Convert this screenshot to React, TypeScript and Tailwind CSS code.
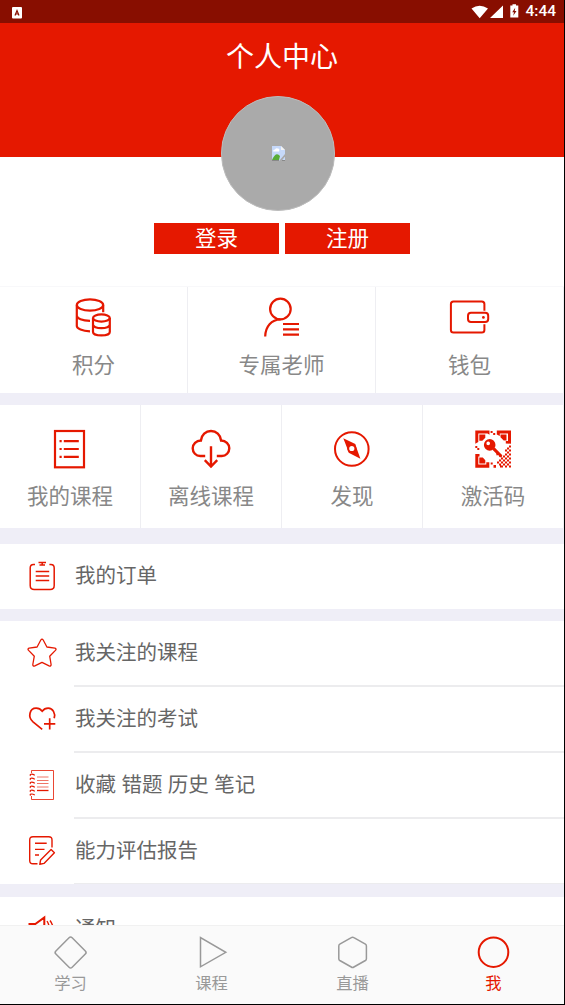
import type { ReactNode } from 'react';

type Item = { label: string; icon: ReactNode };

const line = { fill: 'none', stroke: 'currentColor' } as const;

const CoinsIcon = () => (
  <svg viewBox="0 0 44 44" className="w-11 h-11" {...line} strokeWidth="2.2">
    <ellipse cx="18" cy="9" rx="13.2" ry="5.6" />
    <path d="M4.8 9.2V30c0 2.7 5.5 5 13.2 5.3M31.2 9.2v7M4.8 19.5c0 3 5.500 5.3 13.200 5.300" />
    <ellipse cx="29.4" cy="22" rx="8.4" ry="3.6" />
    <path d="M21 22v14c0 2 3.7 3.4 8.4 3.4s8.4-1.4 8.4-3.4V22M21 28.6c0 2 3.7 3.6 8.4 3.6s8.4-1.6 8.4-3.6" />
  </svg>
);

const TeacherIcon = () => (
  <svg viewBox="0 0 44 44" className="w-11 h-11" {...line} strokeWidth="2.2">
    <circle cx="20.4" cy="13" r="10.3" />
    <path d="M5.2 40.5c.2-10 6.3-17 15.3-17.2M23 28h16M23 33.3h16M23 38.7h16" />
  </svg>
);

const WalletIcon = () => (
  <svg viewBox="0 0 44 44" className="w-11 h-11" {...line} strokeWidth="2">
    <path d="M36.4 14.8V8q0-2.6-2.6-2.6H5.5Q2.9 5.4 2.9 8v26q0 2.600 2.600 2.600h28.300q2.600 0 2.600-2.600v-5.800" />
    <rect x="20" y="16.800" width="20.200" height="9.200" rx="3" />
    <circle cx="35.400" cy="21.400" r="1.400" fill="currentColor" stroke="none" />
  </svg>
);

const CourseIcon = () => (
  <svg viewBox="0 0 44 44" className="w-11 h-11" {...line} strokeWidth="2.200">
    <rect x="7" y="4" width="29" height="36.300" />
    <path d="M15.800 14.100h15M15.800 22h15M15.800 29.800h15M11.500 14.100h2.200M11.500 22h2.200M11.500 29.800h2.200" />
  </svg>
);

const OfflineIcon = () => (
  <svg viewBox="0 0 44 44" className="w-11 h-11" {...line} strokeWidth="2.400">
    <path d="M16.200 29h-5c-4.200 0-7.500-3.500-7.500-7.700 0-4.300 3.500-7.700 8.200-7.800C12.500 8 16.700 4 22 4s9.500 4 10.100 9.500c4.700.1 8.200 3.500 8.200 7.800 0 4.200-3.300 7.700-7.500 7.700h-5M22 19.200v20.500M15.800 33.200l6.200 6.300 6.200-6.300" />
  </svg>
);

const CompassIcon = () => (
  <svg viewBox="0 0 44 44" className="w-11 h-11" {...line} strokeWidth="2">
    <circle cx="21.800" cy="22" r="16.800" />
    <path d="M13.300 11.300l12 5.800 1.800 5.400 3.300 9.300-11.700-6-1.800-5.200z" fill="currentColor" stroke="none" />
    <circle cx="21.800" cy="21.500" r="3.600" fill="#fff" />
  </svg>
);

const CodeIcon = () => (
  <svg viewBox="0 0 44 44" className="w-11 h-11" fill="currentColor">
    <path d="M4.300 3.400h14.200v4.300l-2-1.300H7.300v8.500l-3 1.800zM25.800 3.400H40v13.400l-5.200-.4V14H37V6.400h-8.200v2.500l-3-1.500zM4.300 27h4.200v2.500H7.300v8h8v-2.200h3v5.400h-14z" />
    <path d="M8.300 7.500h6v3.200l-3 3h-3zM29.500 7.500h6v6h-2.800l-3.200-3.200zM8.300 30.500h3.500l2.500 2.800v3.200h-6z" />
    <path d="M19.600 4h2v2h-2zM22.200 6h2v2h-2zM4.300 19h2v2h-2zM6.300 21h2v2h-2zM19.700 35.500h2v2h-2zM22.500 38h2.500v2.700h-2.500z" />
    <path fillRule="evenodd" d="M18.700 12.100a5.800 5.800 0 1 1 0 11.600 5.800 5.800 0 0 1 0-11.600zm-1.500 2.500a1.800 1.800 0 1 0 0 3.600 1.800 1.800 0 0 0 0-3.600z" />
    <path d="M21.500 22.800l2.200-2.400 7.600 7.800-.8 2.300-2.100-.4-1.100-2.100-1.600.5-.7-2.300z" />
    <path d="M38 18.500h2v2h-2zM36 20.500h2v2h-2zM38 22.500h2v2h-2zM36 24.500h2v2h-2zM34 22.500h2v2h-2zM38 26.500h2v2h-2zM34 26.500h2v2h-2zM36 28.500h2v2h-2zM32 28.500h2v2h-2zM38 30.500h2v2h-2zM34 30.500h2v2h-2zM30 30.500h2v2h-2zM36 32.500h2v2h-2zM32 32.500h2v2h-2zM28 32.500h2v2h-2zM38 34.500h2v2h-2zM34 34.500h2v2h-2zM30 34.500h2v2h-2zM26 34.500h2v2h-2zM36 36.500h2v2h-2zM32 36.500h2v2h-2zM28 36.500h2v2h-2zM38 38.500h2v2h-2zM34 38.500h2v2h-2zM29 38.500h3v2h-3z" />
  </svg>
);

const OrderIcon = () => (
  <svg viewBox="0 0 32 32" className="w-8 h-8" {...line} strokeWidth="1.500">
    <path d="M9 4.500H7.500Q4.200 4.500 4.200 8v17.500q0 4 4 4h16q4 0 4-4V8q0-3.500-3.300-3.500h-1.500M12.500 2.500h7.500M13.500 5h5.500M16.200 2.500v2.500" />
    <path d="M9.700 11.500h13.500M9.700 16h13.500M9.700 20.500h13.500" strokeWidth="1.300" />
  </svg>
);

const StarIcon = () => (
  <svg viewBox="0 0 32 32" className="w-8 h-8" {...line} strokeWidth="1.300" strokeLinejoin="round">
    <path d="M14.800 3q1.200-1.800 2.400 0l3.700 7 8 1.200q2 .6.500 2.200l-5.700 5.800 1.400 8.300q0 2-2 1.400L16 25.300l-7.200 3.600q-2 .6-2-1.400l1.500-8.300-5.700-5.800q-1.400-1.600.5-2.200l8-1.200z" />
  </svg>
);

const HeartIcon = () => (
  <svg viewBox="0 0 32 32" className="w-8 h-8" {...line} strokeWidth="1.700">
    <path d="M16.200 26.300L7 18.800C1.500 14 3.500 5.200 10.200 5.200c2.800 0 4.500 1 6 3 1.500-2 3.400-3 6-3 4.600 0 7.500 5 6 10M23.700 15.200v11.300M18 20.800h11.300" />
  </svg>
);

const NotebookIcon = () => (
  <svg viewBox="0 0 32 32" className="w-8 h-8" {...line} strokeWidth="1">
    <path d="M5.500 4V1.500h22v29h-22V27" opacity=".8" />
    <path d="M8.800 6.200c-3-1.700-5.500-1-4.300.6M8.800 10.200c-3-1.700-5.500-1-4.300.6M8.800 14.200c-3-1.700-5.500-1-4.300.6M8.800 18.200c-3-1.700-5.500-1-4.300.6M8.800 22.200c-3-1.700-5.500-1-4.300.6M8.800 26c-3-1.700-5.500-1-4.300.6" strokeWidth="1.200" />
    <path d="M11 8h11.500M11 11.500h11.500M11 14.500h11.500M11 18h11.500" opacity=".6" />
    <path d="M11 21.500h11.500" strokeWidth="1.300" />
  </svg>
);

const ReportIcon = () => (
  <svg viewBox="0 0 32 32" className="w-8 h-8" {...line} strokeWidth="1.400">
    <path d="M26 12.500V5q0-3.300-3.300-3.300H7Q3.700 1.700 3.700 5v20.500q0 3.300 3.300 3.300h4.500M9 8.300h11.700M9 14.400h9.500M9 20h4" />
    <path d="M13.800 29.300l.8-4.300 10.500-10.400 3.300 3.200L18 28.400z" strokeLinejoin="round" />
  </svg>
);

const SpeakerIcon = () => (
  <svg viewBox="0 0 32 32" className="w-8 h-8" {...line} strokeWidth="2">
    <path d="M3.500 11h5.800l9-6.600v23l-9-6.600H3.500z" />
    <path d="M21 8q4.500 7.500 0 15M24 7.500q6 8 0 17" strokeWidth="1.400" />
  </svg>
);

const stats: Item[] = [
  { label: '积分', icon: <CoinsIcon /> },
  { label: '专属老师', icon: <TeacherIcon /> },
  { label: '钱包', icon: <WalletIcon /> },
];

const shortcuts: Item[] = [
  { label: '我的课程', icon: <CourseIcon /> },
  { label: '离线课程', icon: <OfflineIcon /> },
  { label: '发现', icon: <CompassIcon /> },
  { label: '激活码', icon: <CodeIcon /> },
];

const links: Item[] = [
  { label: '我关注的课程', icon: <StarIcon /> },
  { label: '我关注的考试', icon: <HeartIcon /> },
  { label: '收藏 错题 历史 笔记', icon: <NotebookIcon /> },
  { label: '能力评估报告', icon: <ReportIcon /> },
];

const tabs = [
  { label: '学习', shape: <rect x="6.100" y="7" width="23" height="23" rx="2.200" transform="rotate(45 17.600 18.500)" /> },
  { label: '课程', shape: <path d="M6.500 3.500v29.300L31.800 18.300z" /> },
  { label: '直播', shape: <path d="M16.300 3.600q1.300-.8 2.600 0l11.500 6.500q1 .6 1 1.800v12.800q0 1.200-1 1.800l-11.500 6.500q-1.300.8-2.600 0L4.800 26.500q-1-.6-1-1.800V11.900q0-1.200 1-1.800z" /> },
  { label: '我', shape: <circle cx="17.500" cy="18.200" r="14.800" strokeWidth="2" />, active: true },
];

function StatusBar() {
  return (
    <div className="h-[23px] shrink-0 bg-[#880e00] flex items-center justify-between pl-3 pr-2 text-white">
      <svg viewBox="0 0 10 12" className="w-2.5 h-3 mt-0.5">
        <rect width="10" height="11.500" rx="1" fill="currentColor" />
        <path d="M3 8.500L5 3.500l2 5M3.700 7h2.600" fill="none" stroke="#880e00" strokeWidth="1.200" />
      </svg>
      <div className="flex items-center">
        <svg viewBox="0 0 50 16" className="w-[50px] h-4 mr-1" fill="currentColor">
          <path d="M.5 4.500q8-5.500 16.500 0L8.700 14.300zM32 1.500V14H19z" />
          <path fillRule="evenodd" d="M41.500 1.500V.3h3.500v1.200h2.300v12h-8v-12zm2.700 2.300l-3 4.400h1.800l-.8 3.500 3.300-4.600h-1.800z" />
        </svg>
        <span className="text-[15.500px] leading-none font-medium font-[Roboto,sans-serif]">4:44</span>
      </div>
    </div>
  );
}

// placeholder shown while the user has no avatar
function Avatar() {
  return (
    <div className="w-[114px] h-[115px] mt-[9px] mr-[9px] rounded-full bg-[#aaa] border border-[#bcbcbc] flex items-center justify-center">
      <svg viewBox="0 0 13 15" className="w-[13px] h-[15px] ml-px">
        <path d="M0 0h9l4 4v11H0z" fill="#c6d9fa" />
        <path d="M1 5.500q0-2 2-2 1-2 3-1 2 0 1 3z" fill="#fff" />
        <path d="M0 14q4-9 8-4l-1 4z" fill="#59ad38" />
        <path d="M9 0v4h4z" fill="#f3f3f3" />
        <path d="M0 14.500h7M9.500 14.500H13" stroke="#888" fill="none" />
        <path d="M7 15l6-7v2.500L9.500 15z" fill="#aaa" />
      </svg>
    </div>
  );
}

function Grid({ items, className }: { items: Item[]; className: string }) {
  return (
    <div className={`shrink-0 flex bg-white ${className}`}>
      {items.map(item => (
        <div key={item.label} className="flex-1 flex flex-col items-center border-r border-[#eeeef2] text-[#e51800]">
          {item.icon}
          <span className="mt-[13px] text-[21.500px] leading-[22px] text-[#888] whitespace-nowrap">{item.label}</span>
        </div>
      ))}
    </div>
  );
}

function Row({ item, divider }: { item: Item; divider?: boolean }) {
  return (
    <div className="h-[66px] shrink-0 flex bg-white text-[#e51800]">
      <div className="w-[74px] pl-[26px] pt-4">{item.icon}</div>
      <div className={`flex-1 pt-[19px] pl-px ${divider ? 'border-b-2 border-[#ececee]' : ''}`}>
        <span className="block text-[20.500px] leading-[22px] [word-spacing:0.8px] text-[#666]">{item.label}</span>
      </div>
    </div>
  );
}

export default function App() {
  return (
    <div className="w-[565px] h-[1005px] bg-black pr-px pb-px font-['Noto_Sans_CJK_SC',sans-serif]">
      <div className="h-full flex flex-col overflow-hidden bg-[#efeef7]">
        <StatusBar />
        <div className="h-[263px] shrink-0 flex flex-col items-center bg-[linear-gradient(#e51800_134px,#fff_134px)]">
          <h1 className="mt-[17px] h-[47px] text-[28px] leading-[30px] text-white">个人中心</h1>
          <Avatar />
          <div className="flex gap-1.5 mt-3">
            <button className="w-[125px] h-[31px] bg-[#e51800] text-white text-[21.500px] leading-[27px] pb-1">登录</button>
            <button className="w-[125px] h-[31px] bg-[#e51800] text-white text-[21.500px] leading-[27px] pb-1">注册</button>
          </div>
        </div>

        <Grid items={stats} className="h-[107px] border-t border-[#f8f8fa] [&>div]:pt-[9px]" />
        <Grid items={shortcuts} className="mt-3 h-[122.500px] [&>div]:pt-[22px]" />

        <div className="mt-4 h-[65px] shrink-0 overflow-hidden">
          <Row item={{ label: '我的订单', icon: <OrderIcon /> }} />
        </div>

        <div className="mt-3 shrink-0 h-[263.500px] overflow-hidden">
          {links.map(item => (
            <Row key={item.label} item={item} divider />
          ))}
        </div>

        <div className="mt-[13px] flex-1 min-h-0 overflow-hidden">
          <Row item={{ label: '通知', icon: <SpeakerIcon /> }} />
        </div>

        <nav className="h-[79px] shrink-0 flex bg-[#fafafa] border-t border-[#f1f1f1]">
          {tabs.map(tab => (
            <div key={tab.label} className={`flex-1 flex flex-col items-center pt-2 ${tab.active ? 'text-[#e51800]' : 'text-[#999]'}`}>
              <svg viewBox="0 0 36 36" className="w-9 h-9" {...line} strokeWidth="1.500">{tab.shape}</svg>
              <span className="mt-[3px] text-[16.300px] leading-[18px]">{tab.label}</span>
            </div>
          ))}
        </nav>
      </div>
    </div>
  );
}
